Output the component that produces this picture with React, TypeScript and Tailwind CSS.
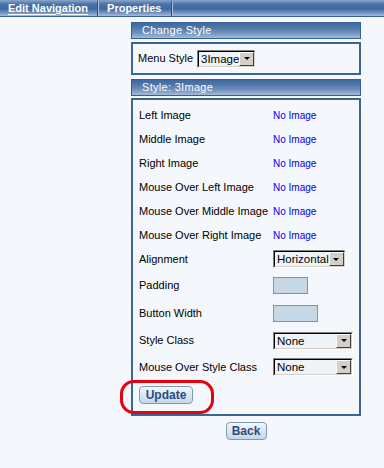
import React from 'react'

const font = { fontFamily: '"Liberation Sans", Arial, sans-serif' }

function Select({ value, width }: { value: string; width: string }) {
  return (
    <div className={`${width} h-[18px] flex border border-t-[#808080] border-l-[#808080] border-b-white border-r-white`}>
      <div className="flex-1 flex border border-t-black border-l-black border-b-[#d4d0c8] border-r-[#d4d0c8] bg-[#eef3f7]">
        <span className="flex-1 pl-[2px] text-[11.5px] leading-[14px] text-black whitespace-nowrap overflow-hidden">{value}</span>
        <div className="w-[15px] h-[14px] shrink-0 bg-[#d4d0c8] border border-t-white border-l-white border-b-[#404040] border-r-[#404040] flex items-center justify-center">
          <div className="w-0 h-0 border-l-[3px] border-r-[3px] border-t-[3px] border-l-transparent border-r-transparent border-t-black" />
        </div>
      </div>
    </div>
  )
}

function Btn({ label, className = '' }: { label: string; className?: string }) {
  return (
    <button className={`h-[18px] rounded-[4px] border border-[#7f9ab9] bg-gradient-to-b from-[#f3f7fc] to-[#c5d6ea] text-[12px] font-bold text-[#2c4c7c] leading-none ${className}`}>
      {label}
    </button>
  )
}

function Header({ title }: { title: string }) {
  return (
    <div className="h-[17px] border border-[#36608f] bg-[linear-gradient(to_bottom,#3f699e_0%,#4e76aa_30%,#6f90bd_65%,#a6bbd7_100%)] flex items-center pl-[10px] text-[11px] tracking-[0.3px] text-white">
      {title}
    </div>
  )
}

const imageRows = ['Left Image', 'Middle Image', 'Right Image', 'Mouse Over Left Image', 'Mouse Over Middle Image', 'Mouse Over Right Image']

export default function App() {
  return (
    <div className="w-[384px] h-[468px] bg-[#f4f7fb] flex flex-col" style={font}>
      {/* tab bar */}
      <div className="h-[17px] border-b border-[#3a5e8e] bg-[linear-gradient(to_bottom,#8aa5ca_0%,#4a74a8_25%,#3f6a9f_55%,#7f9dc5_85%,#a8bddb_100%)] flex items-center text-[11px] font-bold text-white">
        <span className="ml-[8px] underline underline-offset-2">Edit Navigation</span>
        <div className="ml-[9px] w-[2px] h-[15px] border-l border-[#2d4f7c] border-r border-r-[#a9bedb]" />
        <span className="ml-[8px]">Properties</span>
        <div className="ml-[10px] w-[2px] h-[15px] border-l border-[#2d4f7c] border-r border-r-[#a9bedb]" />
      </div>

      <div className="ml-[131px] w-[230px] mt-[5px] flex flex-col">
        <Header title="Change Style" />
        <div className="mt-[3px] h-[33px] border-2 border-[#3b6597] flex items-center pl-[5px] text-[11px] text-black">
          <span>Menu Style</span>
          <div className="ml-[4px]">
            <Select value="3Image" width="w-[58px]" />
          </div>
        </div>

        <div className="mt-[4px]">
          <Header title="Style: 3Image" />
        </div>
        <div className="relative mt-[2px] border-2 border-[#3b6597] pt-[3px] pb-[10px] pl-[6px] text-[11px] text-black">
          {imageRows.map((r) => (
            <div key={r} className="h-[24px] flex items-center">
              <span className="w-[134px]">{r}</span>
              <span className="text-[10px] text-[#0000ee]">No Image</span>
            </div>
          ))}
          <div className="h-[24px] flex items-center">
            <span className="w-[134px]">Alignment</span>
            <Select value="Horizontal" width="w-[72px]" />
          </div>
          <div className="h-[29px] flex items-center">
            <span className="w-[134px]">Padding</span>
            <div className="w-[35px] h-[17px] bg-[#c6d7e6] border border-[#8592a0]" />
          </div>
          <div className="h-[27px] flex items-center">
            <span className="w-[134px]">Button Width</span>
            <div className="w-[45px] h-[17px] bg-[#c6d7e6] border border-[#8592a0]" />
          </div>
          <div className="h-[27px] flex items-center">
            <span className="w-[134px]">Style Class</span>
            <Select value="None" width="w-[80px]" />
          </div>
          <div className="h-[26px] flex items-center">
            <span className="w-[134px]">Mouse Over Style Class</span>
            <Select value="None" width="w-[80px]" />
          </div>
          <div className="mt-[6px] flex">
            <Btn label="Update" className="w-[54px]" />
          </div>
          {/* highlight */}
          <div className="absolute left-[-13px] top-[280px] w-[94px] h-[34px] rounded-[14px] border-[3px] border-[#e8000c]" />
        </div>

        <div className="mt-[6px] flex justify-center">
          <Btn label="Back" className="w-[41px]" />
        </div>
      </div>
    </div>
  )
}
